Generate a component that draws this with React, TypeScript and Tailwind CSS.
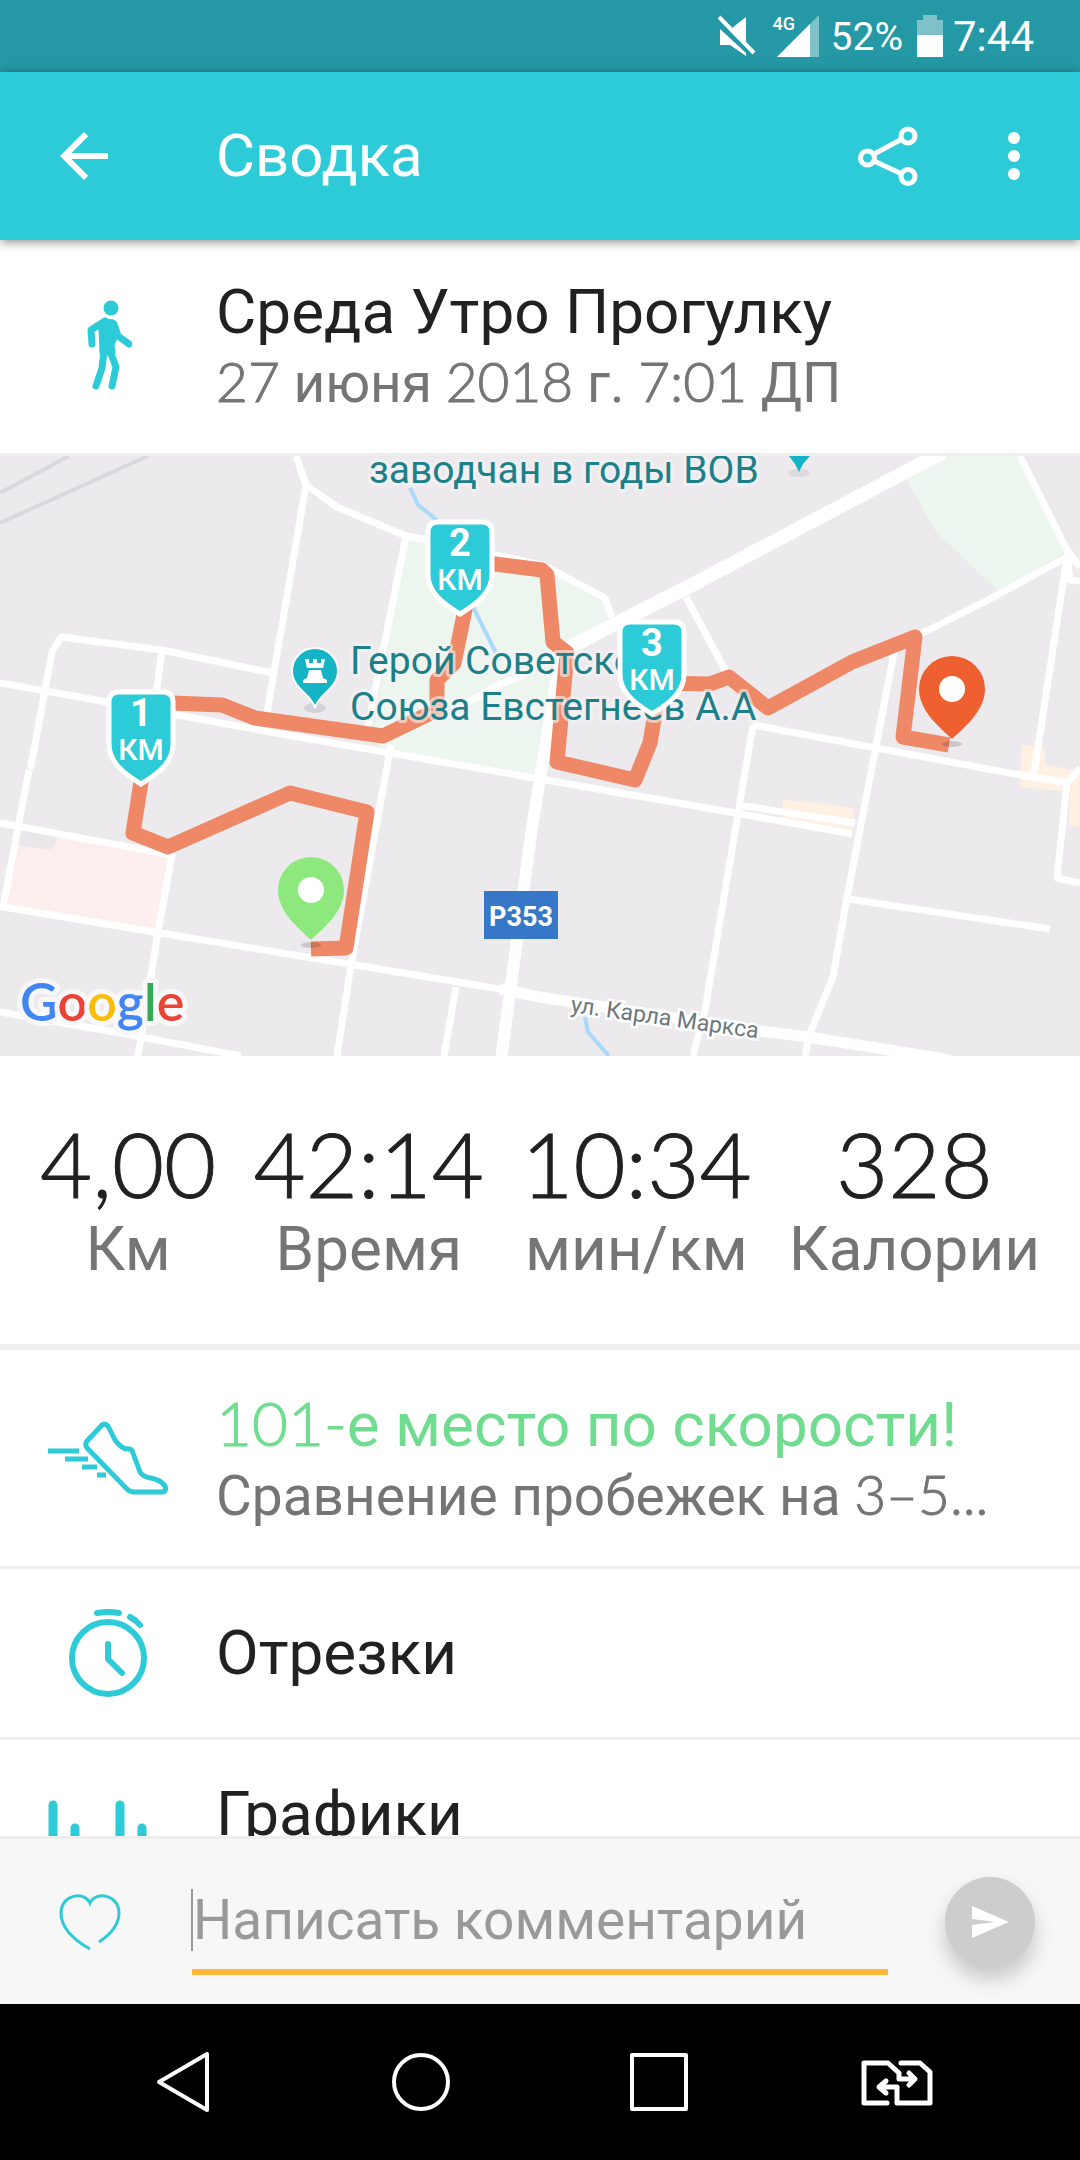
import { useState } from 'react';
import type { JSX, ReactNode } from 'react';

interface Stat {
  value: string;
  label: string;
}

interface KmMarker {
  km: number;
  x: number;
  y: number;
}

const STATS: Stat[] = [
  { value: '4,00', label: 'Км' },
  { value: '42:14', label: 'Время' },
  { value: '10:34', label: 'мин/км' },
  { value: '328', label: 'Калории' },
];

const KM_MARKERS: KmMarker[] = [
  { km: 1, x: 141, y: 234 },
  { km: 2, x: 460, y: 64 },
  { km: 3, x: 652, y: 164 },
];

const ROUTE =
  'M311 493L346 492L367 356L290 337L168 391L133 377L141 326L148 246L222 249L255 262L383 280L437 254V224L454 207L465 154L462 104L495 108L542 114L547 119L553 186L567 197L557 306L635 324L650 287L655 257L658 227L710 228L729 221L768 252L852 206L915 181L903 281L949 289';

// Minor streets, drawn at one width
const STREETS = [
  'M296 0L306 29L337 51L406 80L430 84L545 110L605 142L612 161',
  'M306 29L267 257',
  'M29 314L3 451L506 534',
  'M31 304V310L52 196L61 181L162 194L272 217',
  'M162 194L156 240',
  'M0 227L107 246L275 277L540 323L736 357L852 378',
  'M406 80L365 285',
  'M391 289L351 509L337 600',
  'M0 367L172 399L158 476L138 600',
  'M0 556L120 577L241 600',
  'M456 531L444 600',
  'M686 141L726 216',
  'M915 181L988 144L1067 101L1034 317',
  'M1020 0L1067 94L1080 111M1067 97L1070 124L1080 125',
  'M753 269L1015 318L1067 327L1057 422L1080 427M1067 327L1080 312',
  'M753 269L705 554L693 600',
  'M895 191L846 447L833 521L810 577L805 600',
  'M738 349L855 367',
  'M848 443L1050 473',
  'M461 250L500 228L517 222L555 200',
];

export default function App(): JSX.Element {
  return (
    <div className="flex h-screen flex-col overflow-hidden bg-white font-['Roboto',sans-serif] text-[#212121]">
      <StatusBar />
      <AppBar />
      <main className="min-h-0 flex-1 overflow-hidden">
        <section className="flex h-[216px] items-center border-b-3 border-[#eeeeee] pb-1">
          <IconCell><WalkIcon /></IconCell>
          <div>
            <h2 className="text-[62px] leading-[76px]">Среда Утро Прогулку</h2>
            <p className="text-[55px] leading-[66px] text-[#757575]">
              <Digits>27</Digits> июня <Digits>2018</Digits> г. <Digits>7:01</Digits> ДП
            </p>
          </div>
        </section>

        <RouteMap />

        <section className="flex h-[294px] items-center justify-between border-b-6 border-[#eeeeee] px-10 pb-0.5 text-center">
          {STATS.map((stat) => (
            <div key={stat.label}>
              <p className="font-['Lato',sans-serif] text-[90px] font-light leading-[100px] [-webkit-text-stroke:1px_currentColor]">
                {stat.value}
              </p>
              <p className="text-[62px] leading-[72px] text-[#757575]">{stat.label}</p>
            </div>
          ))}
        </section>

        <button type="button" className="flex h-[219px] w-full items-center border-b-3 border-[#eeeeee] text-left">
          <IconCell><ShoeIcon /></IconCell>
          <span className="min-w-0 flex-1 pr-16">
            <span className="block text-[62px] leading-[76px] text-[#6fdc8f]">
              <Digits>101-</Digits>е место по скорости!
            </span>
            <span className="block truncate text-[55px] leading-[66px] text-[#757575]">
              Сравнение пробежек на <Digits>3–5...</Digits>
            </span>
          </span>
        </button>
        <button type="button" className="flex h-[171px] w-full items-center border-b-3 border-[#eeeeee] text-left">
          <IconCell><StopwatchIcon /></IconCell>
          <span className="text-[62px] leading-[72px]">Отрезки</span>
        </button>
        <button type="button" className="flex h-[148px] w-full items-center text-left">
          <IconCell><ChartIcon /></IconCell>
          <span className="text-[62px] leading-[72px]">Графики</span>
        </button>
      </main>
      <CommentBar />
      <NavBar />
    </div>
  );
}

// Numbers sit between light and regular, hence the thin stroke
function Digits({ children }: { children: ReactNode }): JSX.Element {
  return (
    <span className="font-['Lato',sans-serif] font-light leading-none [-webkit-text-stroke:1px_currentColor]">
      {children}
    </span>
  );
}

function IconCell({ children }: { children: ReactNode }): JSX.Element {
  return <span className="flex w-[216px] shrink-0 justify-center">{children}</span>;
}

function StatusBar(): JSX.Element {
  return (
    <div className="flex h-[72px] shrink-0 items-center justify-end bg-[#2498a5] pr-[46px] text-white">
      <svg width="40" height="42" viewBox="0 0 40 42" fill="currentColor" aria-hidden="true">
        <path d="M3 14V30H13L29 41V38Z" />
        <path d="M29 2V30L15 13Z" />
        <path d="M2 2L37 38" stroke="currentColor" strokeWidth="4" />
      </svg>
      <div className="relative ml-5 h-[42px] w-[42px]">
        <svg width="42" height="42" viewBox="0 0 42 42" aria-hidden="true">
          <path d="M42 0V42H0Z" fill="#7fc1c9" />
          <path d="M33 9V42H0Z" fill="#fff" />
        </svg>
        <span className="absolute -left-1 top-0 text-[18px] font-medium leading-[18px]">4G</span>
      </div>
      <span className="ml-3 pt-0.5 text-[39px] leading-[48px]">52%</span>
      <svg className="ml-3.5" width="26" height="42" viewBox="0 0 26 42" aria-hidden="true">
        <path d="M6 0H20V5H26V20H0V5H6Z" fill="#7fc1c9" />
        <path d="M0 20H26V42H0Z" fill="#fff" />
      </svg>
      <span className="ml-2.5 pt-0.5 text-[42px] leading-[48px]">7:44</span>
    </div>
  );
}

function AppBar(): JSX.Element {
  return (
    <header className="z-10 flex h-[168px] shrink-0 items-center bg-[#2dcad7] text-white shadow-[0_2px_10px_rgba(0,0,0,0.45)]">
      <button type="button" aria-label="Назад" className="ml-12">
        <svg width="72" height="72" viewBox="0 0 24 24" fill="currentColor" aria-hidden="true">
          <path d="M20 11H7.83l5.59-5.59L12 4l-8 8 8 8 1.41-1.41L7.83 13H20v-2z" />
        </svg>
      </button>
      <h1 className="ml-24 flex-1 text-[60px] leading-[72px]">Сводка</h1>
      <button type="button" aria-label="Поделиться">
        <svg width="60" height="60" viewBox="0 0 60 60" fill="none" stroke="currentColor" strokeWidth="5" aria-hidden="true">
          <circle cx="9.500" cy="32" r="7" />
          <circle cx="50" cy="10" r="7" />
          <circle cx="50" cy="50.500" r="7" />
          <path d="M16 28L44 13M16 35L44 48" />
        </svg>
      </button>
      <button type="button" aria-label="Ещё" className="ml-[78px] mr-12">
        <svg width="36" height="48" viewBox="0 0 36 48" fill="currentColor" aria-hidden="true">
          <circle cx="18" cy="6" r="6" />
          <circle cx="18" cy="24" r="6" />
          <circle cx="18" cy="42" r="6" />
        </svg>
      </button>
    </header>
  );
}

function RouteMap(): JSX.Element {
  return (
    <svg
      className="block h-[600px] w-full bg-[#eceaed]"
      viewBox="0 0 1080 600"
      preserveAspectRatio="xMidYMid slice"
      fontFamily="Roboto, sans-serif"
      role="img"
      aria-label="Карта маршрута"
    >
      {/* Areas */}
      <path d="M406 81L430 84L545 110L605 142L612 161L571 187L561 207L543 323L391 296L372 283Z" fill="#edf6ee" />
      <path d="M939 0H1018L1066 95L1000 136L936 76L907 24Z" fill="#edf6ee" />
      <path d="M17 371L171 399L159 474L4 450Z" fill="#fdeeee" />
      <path d="M18 371L58 379L54 390Q52 395 44 393L16 389Z" fill="#e9e7ea" />
      <path d="M783 344L816 347L854 352L852 379L825 376L783 366Z" fill="#fef1e4" />
      <path d="M1022 289L1044 291L1046 309L1080 315V371L1069 370L1070 336L1020 331Z" fill="#fef1e4" />

      <path d="M0 37L69 0M0 67L148 0" stroke="#d9d8dd" strokeWidth="4" fill="none" />
      <path d="M410 32L418 49L437 64M473 151L496 197M585 561L588 576L609 600" stroke="#aad9fc" strokeWidth="4" fill="none" />

      <g stroke="#fff" fill="none" strokeLinejoin="round">
        {STREETS.map((d) => (
          <path key={d} d={d} strokeWidth="7" />
        ))}
        <path d="M568 190L558 215L532 371L501 604" strokeWidth="12" />
        <path d="M943 -4L688 131L568 192" strokeWidth="14" />
        <path d="M500 533L540 541L753 574L815 582L950 604" strokeWidth="11" />
      </g>

      <path d={ROUTE} stroke="#ee8867" strokeWidth="15" strokeLinejoin="round" fill="none" />

      {/* Place labels */}
      <g fill="#1b8089" stroke="#f5f4f6" strokeOpacity="0.6" strokeWidth="6" strokeLinejoin="round" paintOrder="stroke" fontSize="39">
        <text x="369" y="27">заводчан в годы ВОВ</text>
        <text x="350" y="218">Герой Советского</text>
        <text x="350" y="264">Союза Евстегнеев А.А</text>
      </g>
      <text
        x="570"
        y="556"
        transform="rotate(8 570 556)"
        fill="#6c777b"
        stroke="#fff"
        strokeWidth="5"
        paintOrder="stroke"
        fontSize="23"
      >
        ул. Карла Маркса
      </text>

      <ellipse cx="799" cy="17" rx="11" ry="4" fill="#dcdadd" />
      <path d="M789 0H810L803 8L799 16L795 8Z" fill="#15b3c6" />

      {/* Castle pin */}
      <ellipse cx="315" cy="252" rx="11" ry="5" fill="#d4d2d6" />
      <path
        d="M315 252C312 238 292 233 292 215A23 23 0 0 1 338 215C338 233 318 238 315 252Z"
        fill="#15b3c6"
        stroke="#fff"
        strokeWidth="2"
      />
      <path d="M305 203H309V207H313V203H317V207H321V203H325L323 212H307ZM309 214H321L323 222L327 224V227H303V224L307 222Z" fill="#fff" />

      <rect x="484" y="435" width="74" height="48" fill="#3777c8" />
      <text x="521" y="470" fill="#fff" fontSize="27" fontWeight="700" textAnchor="middle">Р353</text>

      <text
        x="20"
        y="565"
        fontFamily="Lato, sans-serif"
        fontSize="52"
        fontWeight="600"
        stroke="#f8f7fa"
        strokeWidth="10"
        strokeLinejoin="round"
        paintOrder="stroke"
      >
        <tspan fill="#4285f4">G</tspan>
        <tspan fill="#ea4335">o</tspan>
        <tspan fill="#fbbc05">o</tspan>
        <tspan fill="#4285f4">g</tspan>
        <tspan fill="#34a853">l</tspan>
        <tspan fill="#ea4335">e</tspan>
      </text>

      {KM_MARKERS.map((marker) => (
        <g key={marker.km} transform={`translate(${marker.x} ${marker.y})`}>
          <path
            d="M-22 2H22Q32 2 32 12V54C32 72 18 83 0 94C-18 83 -32 72 -32 54V12Q-32 2 -22 2Z"
            fill="#2dcad7"
            stroke="#fff"
            strokeWidth="5"
          />
          <text y="36" fill="#fff" fontSize="38" fontWeight="700" textAnchor="middle">{marker.km}</text>
          <text y="70" fill="#fff" fontSize="30" fontWeight="500" textAnchor="middle">КМ</text>
        </g>
      ))}

      <MapPin x={311} y={401} color="#8de97e" />
      <MapPin x={952} y={200} color="#ee6030" />
    </svg>
  );
}

function MapPin({ x, y, color }: { x: number; y: number; color: string }): JSX.Element {
  return (
    <g transform={`translate(${x} ${y})`}>
      <ellipse cx="0" cy="88" rx="10" ry="3" fill="#000" fillOpacity="0.15" />
      <path d="M0 83C-10 73 -33 56 -33 33A33 33 0 0 1 33 33C33 56 10 73 0 83Z" fill={color} />
      <circle cx="0" cy="33" r="13" fill="#fff" />
    </g>
  );
}

function WalkIcon(): JSX.Element {
  return (
    <svg width="48" height="92" viewBox="0 0 48 92" fill="none" stroke="#2dcad7" strokeLinecap="round" strokeLinejoin="round" aria-hidden="true">
      <circle cx="27" cy="9" r="7.500" fill="#2dcad7" stroke="none" />
      <path d="M22 22L29 23L32 36L28 46L29 54L18 54L17 30Z" fill="#2dcad7" strokeWidth="5" />
      <path d="M21 22L7 31L8 45M30 25L34 37L45 45" strokeWidth="7" />
      <path d="M20 52L18 69L12 87M26 52L32 68L28 87" strokeWidth="7" />
    </svg>
  );
}

function ShoeIcon(): JSX.Element {
  return (
    <svg width="120" height="74" viewBox="0 0 120 74" fill="none" stroke="#2dcad7" strokeWidth="5" strokeLinejoin="round" aria-hidden="true">
      <path d="M54 4Q57 2 60 5L67 19Q72 26 78 28Q84 27 85 32L92 51Q95 56 103 57Q113 59 117 65Q119 71 114 71H86Q82 71 79 68L40 28Q36 24 39 20Z" />
      <path d="M0 30H31M17 38H40M34 46H49M49 54H58" />
    </svg>
  );
}

function StopwatchIcon(): JSX.Element {
  return (
    <svg width="80" height="88" viewBox="0 0 80 88" fill="none" stroke="#2dcad7" strokeWidth="6" strokeLinecap="round" strokeLinejoin="round" aria-hidden="true">
      <circle cx="40" cy="49" r="36" />
      <path d="M29 4Q40 2 51 4M62 8Q68 11 72 16M40 35V50L54 64" />
    </svg>
  );
}

function ChartIcon(): JSX.Element {
  return (
    <svg width="120" height="90" viewBox="0 0 120 90" stroke="#2dcad7" strokeWidth="9" strokeLinecap="round" aria-hidden="true">
      <path d="M5 36V86M27 59V86M49 73V86M72 36V86M94 59V86" />
    </svg>
  );
}

function CommentBar(): JSX.Element {
  const [comment, setComment] = useState('');

  return (
    <form
      className="flex h-[168px] shrink-0 items-center border-t-3 border-[#eeeeee] bg-[#f7f7f7] pl-[58px] pr-[45px]"
      onSubmit={(e) => e.preventDefault()}
    >
      <button type="button" aria-label="Нравится">
        <svg width="64" height="60" viewBox="0 0 64 60" fill="none" stroke="#2dcad7" strokeWidth="3" aria-hidden="true">
          <path d="M32 57C16 48 3 37 3 21C3 2 27 -1 32 11C37 -1 61 2 61 21C61 33 53 42 41 50" />
        </svg>
      </button>
      <div className="ml-[70px] mr-[57px] mt-5 min-w-0 flex-1 border-b-6 border-[#ffb636] pb-[18px]">
        <input
          type="text"
          value={comment}
          onChange={(e) => setComment(e.target.value)}
          placeholder="Написать комментарий"
          aria-label="Написать комментарий"
          className="-ml-px block h-[62px] w-full border-l-2 border-[#9a9a9a] bg-transparent text-[55px] leading-[62px] placeholder:text-[#999999] focus:outline-none"
        />
      </div>
      <button
        type="submit"
        aria-label="Отправить"
        className="flex h-[90px] w-[90px] items-center justify-center rounded-full bg-[#cdcdcd] shadow-[0_12px_20px_rgba(0,0,0,0.2)]"
      >
        <svg width="38" height="32" viewBox="0 0 38 32" fill="#fff" aria-hidden="true">
          <path d="M1 0L38 16L1 32V19L24 16L1 13Z" />
        </svg>
      </button>
    </form>
  );
}

function NavBar(): JSX.Element {
  return (
    <nav className="flex h-[156px] shrink-0 items-center bg-black px-16">
      <NavButton label="Назад">
        <path d="M60 4V60L12 32Z" />
      </NavButton>
      <NavButton label="Домой">
        <circle cx="36" cy="32" r="27" />
      </NavButton>
      <NavButton label="Недавние">
        <path d="M9 5H63V59H9Z" />
      </NavButton>
      <NavButton label="Сменить SIM">
        <path d="M26 53H3V13H27L38 23V29H53M48 23L54 29L48 35M40 13H59L69 22V53H36V37H19M25 31L18 37L25 43" strokeWidth="5" />
      </NavButton>
    </nav>
  );
}

function NavButton({ label, children }: { label: string; children: ReactNode }): JSX.Element {
  return (
    <button type="button" aria-label={label} className="flex flex-1 justify-center">
      <svg
        width="72"
        height="64"
        viewBox="0 0 72 64"
        fill="none"
        stroke="#fff"
        strokeWidth="4"
        strokeLinecap="round"
        strokeLinejoin="round"
        aria-hidden="true"
      >
        {children}
      </svg>
    </button>
  );
}
